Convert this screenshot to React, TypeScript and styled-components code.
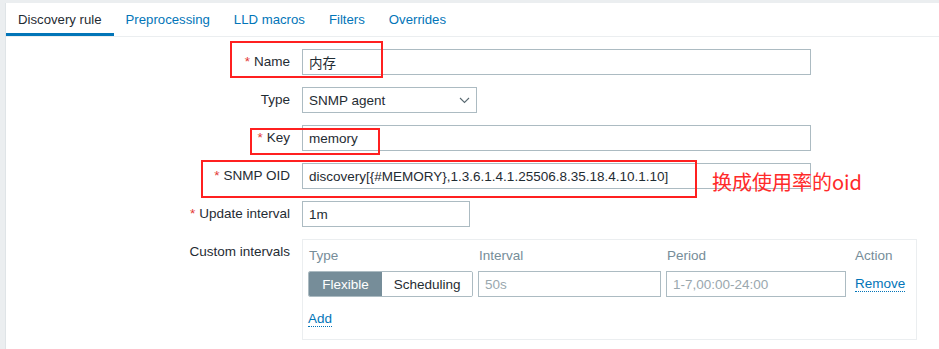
import React from "react";
import styled, { createGlobalStyle } from "styled-components";

const Global = createGlobalStyle`
  html, body { margin: 0; padding: 0; background: #ebeef0; }
  body { font-family: "Liberation Sans", Arial, "Noto Sans CJK SC", sans-serif; font-size: 13.5px; color: #1f2c33; }
  * { box-sizing: border-box; }
`;

const Page = styled.div`
  position: relative;
  padding: 3px 0 0 5px;
  height: 349px;
  overflow: hidden;
`;

const Panel = styled.div`
  background: #fff;
  border-left: 1px solid #dfe4e7;
  min-height: 346px;
`;

const Tabs = styled.nav`
  display: flex;
  height: 34px;
  border-bottom: 1px solid #ebeef0;
`;

const Tab = styled.div<{ $active?: boolean }>`
  display: flex;
  align-items: center;
  height: 33px;
  padding: 0 12px 0 12px;
  font-size: 13.2px;
  color: ${(p) => (p.$active ? "#1f2c33" : "#0275b8")};
  box-shadow: ${(p) => (p.$active ? "inset 0 -3px 0 #0275b8" : "none")};
`;

const Form = styled.div`
  display: grid;
  grid-template-columns: 284px 1fr;
  column-gap: 12px;
  row-gap: 12px;
  padding-top: 12px;
`;

const Label = styled.div<{ $top?: boolean }>`
  display: flex;
  justify-content: flex-end;
  align-items: ${(p) => (p.$top ? "flex-start" : "center")};
  height: ${(p) => (p.$top ? "auto" : "26px")};
  line-height: 26px;
  font-size: 13.5px;
  color: #1f2c33;
  white-space: nowrap;
`;

const Req = styled.span`
  color: #e33734;
  margin-right: 4px;
`;

const Field = styled.div<{ $w?: number }>`
  width: ${(p) => p.$w ?? 509}px;
  height: 26px;
  border: 1px solid #acbbc2;
  background: #fff;
  display: flex;
  align-items: center;
  padding: 0 6px;
  font-size: 13.5px;
  color: #1f2c33;
  white-space: nowrap;
`;

const Placeholder = styled.span`
  color: #9aa7ae;
`;

const SelectBox = styled(Field)`
  justify-content: space-between;
  padding-right: 6px;
`;

const IntervalsBox = styled.div`
  width: 615px;
  height: 101px;
  border: 1px solid #ebeef0;
  padding: 4px 5px 0 5px;
`;

const IntervalsGrid = styled.div`
  display: grid;
  grid-template-columns: 165px 183px 180px auto;
  column-gap: 5px;
  grid-template-rows: 22px 26px;
  row-gap: 5px;
  align-items: center;
`;

const HeadCell = styled.div<{ $pad?: number }>`
  color: #768d99;
  font-size: 13.5px;
  padding-left: ${(p) => p.$pad ?? 1}px;
`;

const Segmented = styled.div`
  display: flex;
  height: 26px;
  border: 1px solid #acbbc2;
  border-radius: 2px;
  overflow: hidden;
`;

const SegButton = styled.div<{ $on?: boolean; $w: number }>`
  width: ${(p) => p.$w}px;
  display: flex;
  align-items: center;
  justify-content: center;
  background: ${(p) => (p.$on ? "#768d99" : "#fff")};
  color: ${(p) => (p.$on ? "#fff" : "#1f2c33")};
  font-size: 13.5px;
`;

const LinkText = styled.span<{ $ml?: number }>`
  color: #0275b8;
  font-size: 13.5px;
  border-bottom: 1px dotted #0275b8;
  line-height: 15px;
  align-self: center;
  justify-self: start;
  margin-left: ${(p) => p.$ml ?? 0}px;
`;

const AddRow = styled.div`
  padding-top: 14px;
`;

const RedBox = styled.div<{ $x: number; $y: number; $w: number; $h: number }>`
  position: absolute;
  left: ${(p) => p.$x}px;
  top: ${(p) => p.$y}px;
  width: ${(p) => p.$w}px;
  height: ${(p) => p.$h}px;
  border: 2px solid #ff2020;
  pointer-events: none;
`;

const Note = styled.div`
  position: absolute;
  left: 712px;
  top: 168px;
  font-family: "Noto Sans CJK SC", "Liberation Sans", sans-serif;
  font-size: 20px;
  line-height: 28px;
  color: #ff2a2a;
  white-space: nowrap;
`;

const Chevron = () => (
  <svg width="11" height="7" viewBox="0 0 11 7">
    <path d="M1 1 L5.5 5.5 L10 1" fill="none" stroke="#5a6a72" strokeWidth="1.1" />
  </svg>
);

export default function App() {
  return (
    <>
      <Global />
      <Page>
        <Panel>
          <Tabs>
            <Tab $active>Discovery rule</Tab>
            <Tab>Preprocessing</Tab>
            <Tab>LLD macros</Tab>
            <Tab>Filters</Tab>
            <Tab>Overrides</Tab>
          </Tabs>
          <Form>
            <Label><Req>*</Req>Name</Label>
            <Field>内存</Field>

            <Label>Type</Label>
            <SelectBox $w={175}>
              <span>SNMP agent</span>
              <Chevron />
            </SelectBox>

            <Label><Req>*</Req>Key</Label>
            <Field>memory</Field>

            <Label><Req>*</Req>SNMP OID</Label>
            <Field>discovery[{"{#MEMORY}"},1.3.6.1.4.1.25506.8.35.18.4.10.1.10]</Field>

            <Label><Req>*</Req>Update interval</Label>
            <Field $w={168}>1m</Field>

            <Label $top>Custom intervals</Label>
            <IntervalsBox>
              <IntervalsGrid>
                <HeadCell>Type</HeadCell>
                <HeadCell>Interval</HeadCell>
                <HeadCell>Period</HeadCell>
                <HeadCell $pad={4}>Action</HeadCell>
                <Segmented>
                  <SegButton $on $w={74}>Flexible</SegButton>
                  <SegButton $w={91}>Scheduling</SegButton>
                </Segmented>
                <Field $w={183}><Placeholder>50s</Placeholder></Field>
                <Field $w={180}><Placeholder>1-7,00:00-24:00</Placeholder></Field>
                <LinkText $ml={4}>Remove</LinkText>
              </IntervalsGrid>
              <AddRow>
                <LinkText>Add</LinkText>
              </AddRow>
            </IntervalsBox>
          </Form>
        </Panel>
        <RedBox $x={230} $y={41} $w={153} $h={37} />
        <RedBox $x={250} $y={128} $w={130} $h={27} />
        <RedBox $x={201} $y={160} $w={496} $h={38} />
        <Note>换成使用率的oid</Note>
      </Page>
    </>
  );
}
